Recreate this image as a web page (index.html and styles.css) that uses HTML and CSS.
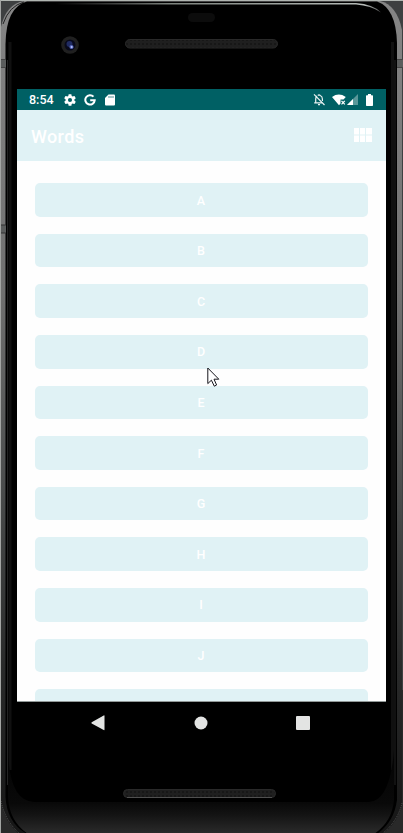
FILE: index.html
```html
<!DOCTYPE html>
<html lang="en">
<head>
<meta charset="utf-8">
<title>Words</title>
<link rel="stylesheet" href="styles.css">
</head>
<body>
<div class="device">
  <svg class="shell" width="403" height="833" viewBox="0 0 403 833" aria-hidden="true">
    <defs>
      <linearGradient id="rail" x1="0" y1="0" x2="0" y2="1">
        <stop offset="0" stop-color="#858585"/>
        <stop offset=".35" stop-color="#707070"/>
        <stop offset=".6" stop-color="#484a4a"/>
        <stop offset=".8" stop-color="#292a2a"/>
        <stop offset="1" stop-color="#161616"/>
      </linearGradient>
      <linearGradient id="chin" x1="0" y1="740" x2="0" y2="833" gradientUnits="userSpaceOnUse">
        <stop offset="0" stop-color="#020202"/>
        <stop offset=".68" stop-color="#090909"/>
        <stop offset=".8" stop-color="#131313"/>
        <stop offset="1" stop-color="#2a2a2a"/>
      </linearGradient>
      <linearGradient id="shine" x1="0" y1="0" x2="1" y2="0">
        <stop offset="0" stop-color="#777" stop-opacity="0"/>
        <stop offset=".35" stop-color="#7c827d"/>
        <stop offset=".95" stop-color="#b7bcb9"/>
        <stop offset="1" stop-color="#555"/>
      </linearGradient>
      <pattern id="mesh" width="4" height="4" patternUnits="userSpaceOnUse">
        <rect width="4" height="4" fill="#171717"/>
        <path d="M1 0v4M3 1v2" stroke="#262626" stroke-width="1"/>
      </pattern>
    </defs>
    <rect width="403" height="833" fill="#3e4041"/>
    <rect y="690" width="403" height="143" fill="#292929"/>
    <path d="M1 27Q6 4 24 1H380Q397 5 402 30V806Q398 822 383 834H19Q5 822 1 804Z" fill="url(#rail)"/>
    <path d="M5.500 44Q6 7 27 1.500H377Q396 8 397 43V800Q394 822 377 834H27Q7 823 5.500 797Z" fill="#000"/>
    <path d="M3 24Q9 6 24 2" fill="none" stroke="#222"/>
    <path d="M7.500 60V785M395 60V785" stroke="#232323"/>
    <path d="M10 42V770M392.500 42V770" stroke="#101010" stroke-width="3"/>
    <path d="M8 750Q9 801 34 802H369Q390 801 394 750V800Q392 822 374 834H28Q9 821 8 797Z" fill="url(#chin)"/>
    <path d="M1 801Q5 821 20 834M402 803Q398 821 382 834" fill="none" stroke="#555" stroke-dasharray="1 1"/>
    <path d="M1 59.500H6M397 59.500H403M1 67.500H6M397 67.500H403" stroke="#444"/>
    <path d="M1 60H6V67H1ZM397 60H403V67H397ZM1 225H6V233H1Z" fill="#5b5d5d"/>
    <path d="M1 225H6M1 233H6" stroke="#333"/>
    <path d="M0 .5H403" stroke="#b0b5b1"/>
    <path d="M.5 0V833" stroke="#a3a5a3"/>
    <path d="M55 3H356Q373 4 381 12.500Q371 5.500 356 4.500H55Z" fill="url(#shine)"/>
    <rect x="188" y="13" width="27" height="9" rx="4.500" fill="#0c0c0c"/>
    <circle cx="70" cy="45" r="8.800" fill="#202020"/>
    <circle cx="70" cy="45" r="5.500" fill="#08091b"/>
    <circle cx="69.500" cy="44" r="3" fill="#202b62"/>
    <circle cx="71.500" cy="47" r="2.100" fill="#5565b9"/>
    <circle cx="71.700" cy="47" r="1" fill="#bac6ff"/>
    <rect x="125.500" y="39.500" width="152" height="8.500" rx="4.250" fill="url(#mesh)" stroke="#292929"/>
    <rect x="123.500" y="789.500" width="152" height="8" rx="4" fill="url(#mesh)" stroke="#292929"/>
    <path d="M127 797.500H272" stroke="#505050"/>
  </svg>

  <main class="screen">
    <header class="status">
      <span class="time">8:54</span>
      <svg class="gear" width="14" height="14" viewBox="0 0 24 24"><path fill="#fff" d="M19.430 12.980c.04-.32.07-.64.07-.98s-.03-.66-.07-.98l2.110-1.650c.19-.15.24-.42.12-.64l-2-3.460c-.12-.22-.39-.3-.61-.22l-2.490 1c-.52-.4-1.080-.73-1.690-.98l-.38-2.650A.5.5 0 0 0 14 2h-4a.5.5 0 0 0-.49.420l-.38 2.650c-.61.250-1.170.590-1.690.980l-2.490-1c-.23-.09-.49 0-.61.220l-2 3.460c-.13.220-.07.490.12.640l2.110 1.650c-.04.320-.07.650-.07.980s.03.660.07.980l-2.110 1.650c-.19.150-.24.420-.12.640l2 3.460c.12.220.39.300.61.220l2.490-1c.52.400 1.080.730 1.690.980l.38 2.650c.03.240.24.420.49.420h4c.25 0 .46-.18.49-.42l.38-2.650c.61-.25 1.170-.59 1.690-.98l2.490 1c.23.090.49 0 .61-.22l2-3.460c.12-.22.07-.49-.12-.64zM12 15.500A3.500 3.500 0 1 1 12 8.500a3.500 3.500 0 0 1 0 7z"/></svg>
      <svg class="google" width="12" height="12" viewBox="0 0 12 12"><path fill="none" stroke="#fff" stroke-width="2" d="M9.500 2.700A4.700 4.700 0 1 0 10.700 6.300H6.200"/></svg>
      <svg class="card" width="10" height="12" viewBox="0 0 10 12"><path fill="#fff" d="M3.500.5H9Q10 .5 10 1.500V10.500Q10 11.500 9 11.500H1Q0 11.500 0 10.500V4Z"/><path stroke="#006064" stroke-width=".7" d="M4 2v2M6 2v2M8 2v2"/></svg>
      <span class="spacer"></span>
      <svg class="bell" width="12" height="13" viewBox="0 0 12 13"><path fill="none" stroke="#e8f1f1" stroke-width="1.200" d="M1 1.300L11.500 12M2.700 9.700V6Q2.700 3.800 4 3M1.200 9.900H9M4.800 2.500Q6 1.300 7.200 2.500Q9.400 3.300 9.400 6V8M5 11.700H7"/></svg>
      <svg class="wifi" width="14" height="12" viewBox="0 0 14 12"><path fill="#fff" d="M0 3Q6.800-1.800 13.800 3L11.500 5.500H8.500V9.500L7 11.300Z"/><path stroke="#fff" stroke-width="1.200" d="M9.500 6.800l3.300 3.500m0-3.500l-3.300 3.500"/></svg>
      <svg class="signal" width="11" height="11" viewBox="0 0 11 11"><path fill="#599799" d="M0 11L11 0V11Z"/><path fill="#fff" d="M0 11L6 5V11Z"/></svg>
      <svg class="battery" width="7" height="12" viewBox="0 0 7 12"><path fill="#fff" d="M2 0H5V1.300H6.300Q7 1.300 7 2V11.200Q7 12 6.300 12H.7Q0 12 0 11.200V2Q0 1.300.7 1.300H2Z"/></svg>
    </header>
    <div class="appbar">
      <h1 class="title">Words</h1>
      <svg class="grid" width="18" height="14" viewBox="0 0 18 14"><path fill="#fff" d="M0 0H5V6.400H0ZM6 0H11V6.400H6ZM12 0H18V6.400H12ZM0 7.400H5V14H0ZM6 7.400H11V14H6ZM12 7.400H18V14H12Z"/></svg>
    </div>
    <div class="list">
      <div class="item">A</div>
      <div class="item">B</div>
      <div class="item">C</div>
      <div class="item">D</div>
      <div class="item">E</div>
      <div class="item">F</div>
      <div class="item">G</div>
      <div class="item">H</div>
      <div class="item">I</div>
      <div class="item">J</div>
      <div class="item"></div>
    </div>
  </main>
  <nav class="nav">
    <svg width="14" height="16" viewBox="0 0 14 16"><path fill="#e3e4e3" d="M.7 7.300L12.700.4Q13.500 0 13.500 1V14.500Q13.500 15.500 12.700 15L.7 8.500Q0 8 .7 7.300Z"/></svg>
    <svg width="14" height="14" viewBox="0 0 14 14"><circle cx="7" cy="7" r="6.500" fill="#e3e4e3"/></svg>
    <svg width="14" height="14" viewBox="0 0 14 14"><rect width="14" height="14" rx="1" fill="#e3e4e3"/></svg>
  </nav>
  <svg class="pointer" width="14" height="21" viewBox="0 0 14 21"><path fill="#fff" stroke="#15151c" d="M.8 1V16.600L4.400 13.200L7.300 19.200L9.600 18L7 12.200H11.800Z"/></svg>
</div>
</body>
</html>
```
FILE: styles.css
```css
* { box-sizing: border-box; }
body {
  margin: 0;
  overflow: hidden;
  font-family: Roboto, "Liberation Sans", sans-serif;
}
.device {
  position: relative;
  width: 403px;
  height: 833px;
  padding: 89px 17px 0;
  background: #000;
  overflow: hidden;
}
.shell {
  position: absolute;
  inset: 0;
}
.screen {
  position: relative;
  display: flex;
  flex-direction: column;
  width: 369px;
  height: 613px;
  background: #fefefe;
  overflow: hidden;
  border-bottom: 1px solid #929998;
}
.status {
  flex: none;
  display: flex;
  align-items: center;
  height: 21px;
  padding: 0 13px 0 12px;
  background: #006064;
  color: #fff;
}
.time {
  width: 25px;
  font-size: 12.5px;
  font-weight: 500;
  line-height: 22px;
  white-space: nowrap;
}
.gear { margin-left: 9px; }
.google { margin-left: 7px; }
.card { margin-left: 9px; }
.spacer { flex: 1; }
.wifi { margin-left: 7px; }
.signal { margin-left: 1px; }
.battery { margin-left: 8px; }
.appbar {
  flex: none;
  display: flex;
  align-items: center;
  justify-content: space-between;
  height: 51px;
  padding: 0 14px;
  background: #e0f2f5;
}
.title {
  margin: 0;
  padding-top: 1px;
  color: #fff;
  font-size: 18px;
  font-weight: 500;
  letter-spacing: .4px;
}
.grid { margin-bottom: 1px; }
.list {
  display: flex;
  flex-direction: column;
  gap: 17px;
  padding: 22.300px 18px 0;
}
.item {
  flex: none;
  display: flex;
  align-items: center;
  justify-content: center;
  height: 33.600px;
  padding-right: 1px;
  border-radius: 5px;
  background: #e0f2f5;
  color: #fff;
  font-size: 12.500px;
  font-weight: 500;
}
.nav {
  position: relative;
  display: flex;
  align-items: center;
  justify-content: space-between;
  width: 219px;
  height: 42px;
  margin-left: 74px;
}
.pointer {
  position: absolute;
  left: 207px;
  top: 367px;
}
```
